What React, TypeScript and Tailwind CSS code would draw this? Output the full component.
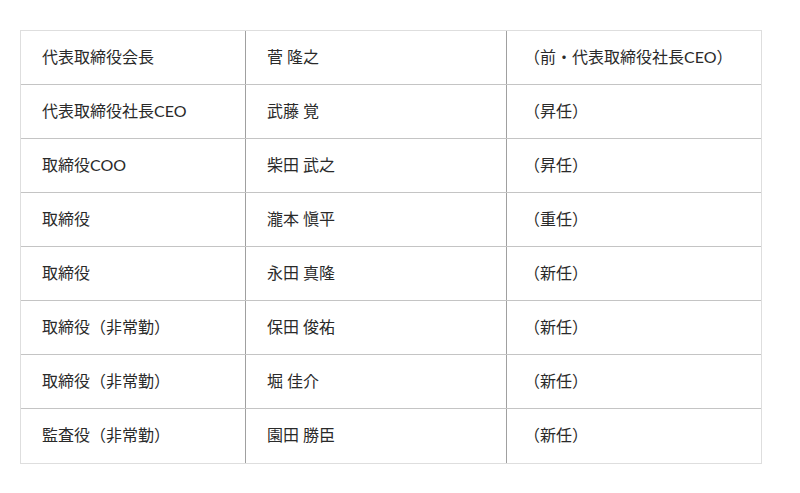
import React from "react";

const rows = [
  ["代表取締役会長", "菅 隆之", "（前・代表取締役社長CEO）"],
  ["代表取締役社長CEO", "武藤 覚", "（昇任）"],
  ["取締役COO", "柴田 武之", "（昇任）"],
  ["取締役", "瀧本 愼平", "（重任）"],
  ["取締役", "永田 真隆", "（新任）"],
  ["取締役（非常勤）", "保田 俊祐", "（新任）"],
  ["取締役（非常勤）", "堀 佳介", "（新任）"],
  ["監査役（非常勤）", "園田 勝臣", "（新任）"],
];

const App = () => {
  return (
    <div
      className="bg-white min-h-[493px] pt-[30px] px-5 text-[#2a2a2a] text-[16px]"
      style={{ fontFamily: 'Lato, "Noto Sans CJK JP", sans-serif' }}
    >
      <div className="w-[742px] border border-[#dedede]">
        {rows.map((r, i) => (
          <div
            key={i}
            className={`flex h-[54px] ${i < rows.length - 1 ? "border-b border-[#c4c4c4]" : ""}`}
          >
            <div className="w-[225px] border-r border-[#a0a0a0] flex items-center pl-[21px] pb-[2px]">{r[0]}</div>
            <div className="w-[261px] border-r border-[#a0a0a0] flex items-center pl-[21px] pb-[2px]">{r[1]}</div>
            <div className="flex-1 flex items-center pl-[17px] pb-[2px]">{r[2]}</div>
          </div>
        ))}
      </div>
    </div>
  );
};

export default App;
